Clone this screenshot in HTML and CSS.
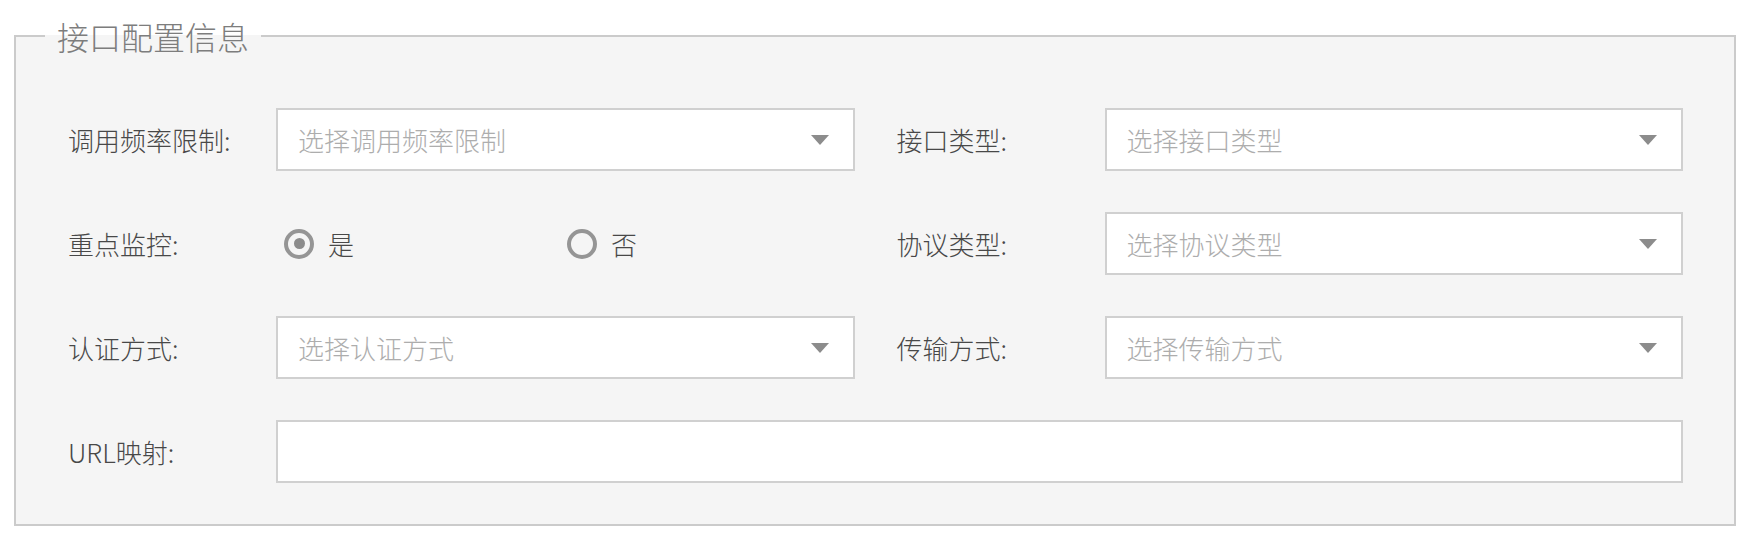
FILE: index.html
```html
<!DOCTYPE html>
<html lang="zh-CN">
<head>
<meta charset="utf-8">
<title>接口配置信息</title>
<link rel="stylesheet" href="styles.css">
</head>
<body>
<div class="page">
  <fieldset class="panel">
    <legend class="panel-title">接口配置信息</legend>
    <div class="form">
      <div class="row">
        <div class="field">
          <span class="label">调用频率限制:</span>
          <div class="select"><span class="placeholder">选择调用频率限制</span><svg class="arrow" width="18" height="10" viewBox="0 0 18 10"><path d="M0 0H18L9 10Z"/></svg></div>
        </div>
        <div class="field">
          <span class="label">接口类型:</span>
          <div class="select"><span class="placeholder">选择接口类型</span><svg class="arrow" width="18" height="10" viewBox="0 0 18 10"><path d="M0 0H18L9 10Z"/></svg></div>
        </div>
      </div>
      <div class="row">
        <div class="field">
          <span class="label">重点监控:</span>
          <div class="radios">
            <label class="radio"><span class="dot checked"></span><span class="radio-text">是</span></label>
            <label class="radio"><span class="dot"></span><span class="radio-text">否</span></label>
          </div>
        </div>
        <div class="field">
          <span class="label">协议类型:</span>
          <div class="select"><span class="placeholder">选择协议类型</span><svg class="arrow" width="18" height="10" viewBox="0 0 18 10"><path d="M0 0H18L9 10Z"/></svg></div>
        </div>
      </div>
      <div class="row">
        <div class="field">
          <span class="label">认证方式:</span>
          <div class="select"><span class="placeholder">选择认证方式</span><svg class="arrow" width="18" height="10" viewBox="0 0 18 10"><path d="M0 0H18L9 10Z"/></svg></div>
        </div>
        <div class="field">
          <span class="label">传输方式:</span>
          <div class="select"><span class="placeholder">选择传输方式</span><svg class="arrow" width="18" height="10" viewBox="0 0 18 10"><path d="M0 0H18L9 10Z"/></svg></div>
        </div>
      </div>
      <div class="row row-full">
        <div class="field">
          <span class="label">URL映射:</span>
          <input class="text-input" type="text">
        </div>
      </div>
    </div>
  </fieldset>
</div>
</body>
</html>
```
FILE: styles.css
```css
html, body {
  margin: 0;
  padding: 0;
  background: #ffffff;
}

body {
  font-family: "Noto Sans CJK SC", "Noto Sans", sans-serif;
  font-weight: 300;
  color: #444444;
}

.page {
  padding: 14px 0 0 14px;
}

.panel {
  box-sizing: border-box;
  width: 1722px;
  margin: 0;
  padding: 50px 51px 41px 52px;
  border: 2px solid #cbcbcb;
  background: #f5f5f5;
  min-width: 0;
}

.panel-title {
  font-size: 32px;
  line-height: 44px;
  color: #7d7d7d;
  padding: 0 12px;
  margin-left: -23px;
}

.form {
  display: flex;
  flex-direction: column;
  gap: 41px;
}

.row {
  display: grid;
  grid-template-columns: 1fr 1fr;
  column-gap: 42px;
}

.row-full {
  grid-template-columns: 1fr;
}

.field {
  display: flex;
  align-items: center;
  height: 63px;
}

.label {
  flex: 0 0 208px;
  font-size: 26px;
  line-height: 30px;
  color: #484848;
}

.select {
  flex: 1;
  box-sizing: border-box;
  height: 63px;
  display: flex;
  align-items: center;
  justify-content: space-between;
  padding: 0 24px 0 20px;
  background: #ffffff;
  border: 2px solid #d0d0d0;
}

.placeholder {
  font-size: 26px;
  color: #adadad;
}

.arrow {
  fill: #8c8c8c;
  flex: none;
}

.text-input {
  flex: 1;
  box-sizing: border-box;
  height: 63px;
  margin: 0;
  padding: 0 20px;
  background: #ffffff;
  border: 2px solid #d0d0d0;
  border-radius: 0;
  outline: none;
  font-family: inherit;
  font-size: 26px;
}

.radios {
  flex: 1;
  display: grid;
  grid-template-columns: 283px 1fr;
  padding-left: 8px;
}

.radio {
  display: flex;
  align-items: center;
  gap: 14px;
}

.dot {
  box-sizing: border-box;
  width: 30px;
  height: 30px;
  border: 4px solid #959595;
  border-radius: 50%;
  display: flex;
  align-items: center;
  justify-content: center;
}

.dot.checked::after {
  content: "";
  width: 11px;
  height: 11px;
  border-radius: 50%;
  background: #8c8c8c;
}

.radio-text {
  font-size: 26px;
  color: #484848;
}
```
